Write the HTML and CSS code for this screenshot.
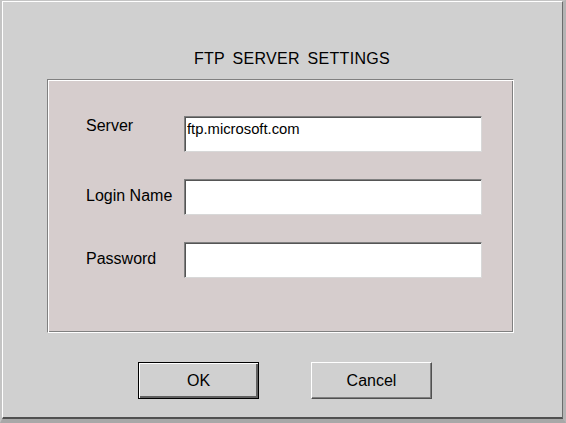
FILE: index.html
```html
<!DOCTYPE html>
<html>
<head>
<meta charset="utf-8">
<title>FTP Server Settings</title>
<link rel="stylesheet" href="styles.css">
</head>
<body>
<div class="dialog">
  <div class="frame">
    <div class="title">FTP SERVER SETTINGS</div>
    <div class="panel">
      <div class="row">
        <label class="label label-top">Server</label>
        <input class="field" type="text" value="ftp.microsoft.com">
      </div>
      <div class="row">
        <label class="label">Login Name</label>
        <input class="field" type="text" value="">
      </div>
      <div class="row">
        <label class="label">Password</label>
        <input class="field" type="password" value="">
      </div>
    </div>
    <div class="buttons">
      <button class="btn btn-default">OK</button>
      <button class="btn">Cancel</button>
    </div>
  </div>
</div>
</body>
</html>
```
FILE: styles.css
```css
* { box-sizing: border-box; }
html, body {
  margin: 0;
  padding: 0;
  background: #d0d0d0;
}
body {
  font-family: "Liberation Sans", Arial, sans-serif;
  color: #000;
}
.dialog {
  width: 566px;
  height: 423px;
  border-style: solid;
  border-width: 1px 3px 4px 2px;
  border-color: #c4c4c4 #b4b4b4 #a8a8a8 #c4c4c4;
  background: #d0d0d0;
}
.frame {
  height: 100%;
  border-style: solid;
  border-width: 1px 1px 2px 1px;
  border-color: #ffffff #6c6c6c #505050 #ffffff;
  padding-top: 48px;
}
.title {
  font-size: 16px;
  line-height: 18px;
  letter-spacing: 0.3px;
  word-spacing: 3px;
  text-align: center;
  padding-left: 19px;
}
.panel {
  margin: 11px 0 0 44px;
  width: 467px;
  height: 254px;
  background: #d6cdcd;
  border: 1px solid;
  border-color: #808080 #ffffff #ffffff #808080;
  box-shadow: inset 1px 1px 0 #ffffff, inset -1px -1px 0 #808080;
  padding: 36px 0 0 38px;
  display: flex;
  flex-direction: column;
  gap: 27px;
}
.row {
  display: flex;
  align-items: center;
  height: 36px;
}
.label {
  width: 98px;
  flex: none;
  font-size: 16px;
  line-height: 18px;
  padding-bottom: 2px;
}
.label-top {
  align-self: flex-start;
  margin-top: 1px;
  padding-bottom: 0;
}
.field {
  width: 298px;
  height: 36px;
  margin: 0;
  font-family: "Liberation Sans", Arial, sans-serif;
  font-size: 14.8px;
  line-height: 16px;
  color: #000;
  background: #ffffff;
  border: 1px solid;
  border-color: #808080 #d8d8d8 #d8d8d8 #808080;
  box-shadow: inset 1px 1px 0 #555555;
  padding: 3px 2px 14px 2px;
  outline: none;
}
.buttons {
  display: flex;
  gap: 52px;
  padding-left: 135px;
  margin-top: 29px;
}
.btn {
  width: 121px;
  height: 37px;
  margin: 0;
  padding: 0;
  font-family: "Liberation Sans", Arial, sans-serif;
  font-size: 16px;
  color: #000;
  background: #d0d0d0;
  border: 1px solid;
  border-color: #ffffff #505050 #505050 #ffffff;
  box-shadow: inset -1px -1px 0 #808080;
}
.btn-default {
  border-color: #000000;
  box-shadow: inset 1px 1px 0 #ffffff, inset -2px -2px 0 #606060;
}
```
